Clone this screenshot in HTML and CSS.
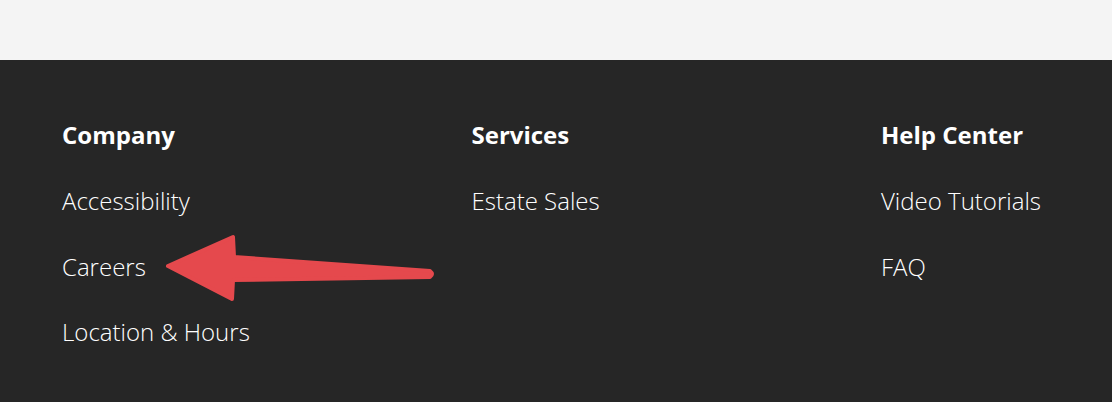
FILE: index.html
```html
<!DOCTYPE html>
<html lang="en">
<head>
<meta charset="utf-8">
<title>Footer</title>
<link rel="stylesheet" href="styles.css">
</head>
<body>
<div class="topband"></div>
<footer class="footer">
  <div class="cols">
    <section class="col">
      <h3 class="col-title">Company</h3>
      <ul class="links">
        <li><a href="#">Accessibility</a></li>
        <li><a href="#">Careers</a></li>
        <li><a href="#">Location &amp; Hours</a></li>
      </ul>
    </section>
    <section class="col">
      <h3 class="col-title">Services</h3>
      <ul class="links">
        <li><a href="#">Estate Sales</a></li>
      </ul>
    </section>
    <section class="col">
      <h3 class="col-title">Help Center</h3>
      <ul class="links">
        <li><a href="#">Video Tutorials</a></li>
        <li><a href="#">FAQ</a></li>
      </ul>
    </section>
  </div>
  <svg class="arrow" width="1112" height="342" viewBox="0 0 1112 342" aria-hidden="true">
    <path d="M168 206 L233 177 L234 197 L430 211 Q434 214 430 217 L233 220 L232 239 Z" fill="#e5494d" stroke="#e5494d" stroke-width="4" stroke-linejoin="round"/>
  </svg>
</footer>
</body>
</html>
```

FILE: styles.css
```css
html, body {
  margin: 0;
  padding: 0;
}
body {
  background: #262626;
  font-family: "Open Sans", "Liberation Sans", sans-serif;
  width: 1112px;
  height: 402px;
  overflow: hidden;
}
.topband {
  height: 60px;
  background: #f4f4f4;
}
.footer {
  position: relative;
  background: #262626;
  height: 342px;
  padding: 59px 0 0 62px;
  box-sizing: border-box;
}
.cols {
  display: grid;
  grid-template-columns: 409.5px 409.5px 1fr;
}
.col-title {
  margin: 0;
  font-size: 24px;
  line-height: 32px;
  font-weight: 700;
  color: #ffffff;
}
.links {
  list-style: none;
  margin: 34px 0 0;
  padding: 0;
  display: flex;
  flex-direction: column;
  gap: 33.5px;
}
.links li {
  font-size: 24px;
  line-height: 32px;
  font-weight: 300;
}
.links a {
  color: #ffffff;
  text-decoration: none;
}
.arrow {
  position: absolute;
  left: 0;
  top: 0;
}
```
